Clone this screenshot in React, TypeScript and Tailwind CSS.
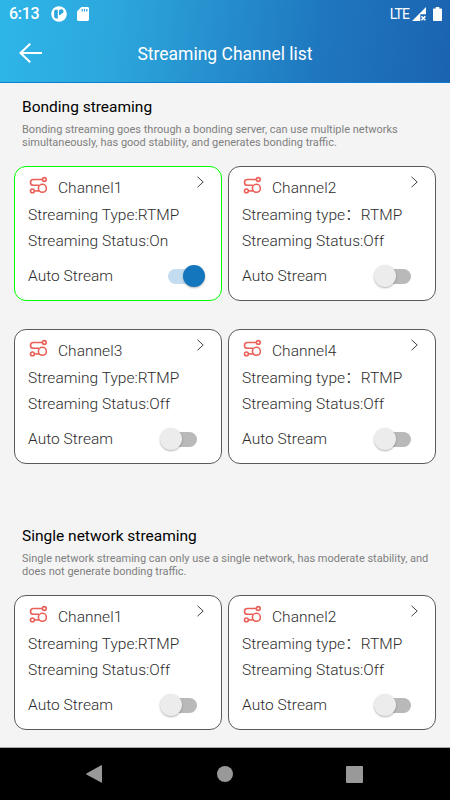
import { useState } from 'react'
import clsx from 'clsx'

type Channel = {
    name: string
    type: string
    live: boolean
}

const bondingChannels: Channel[] = [
    { name: 'Channel1', type: 'Streaming Type:RTMP', live: true },
    { name: 'Channel2', type: 'Streaming type：RTMP', live: false },
    { name: 'Channel3', type: 'Streaming Type:RTMP', live: false },
    { name: 'Channel4', type: 'Streaming type：RTMP', live: false },
]

const singleChannels: Channel[] = [
    { name: 'Channel1', type: 'Streaming Type:RTMP', live: false },
    { name: 'Channel2', type: 'Streaming type：RTMP', live: false },
]

const RouteIcon = () => (
    <svg
        className="h-[19px] w-[18px]"
        viewBox="0 0 18 19"
        fill="none"
        stroke="#ea5f57"
        strokeWidth="1.6"
    >
        <circle cx="15.3" cy="3.5" r="1.9" />
        <circle cx="3.4" cy="14.9" r="1.9" />
        <circle cx="13.4" cy="12.3" r="4" />
        <path d="M13.4 3.5H4.400a2.900 2.900 0 0 0 0 5.800h5.500" />
        <path d="M5.300 14.900h5" />
    </svg>
)

const StatusBar = () => (
    <div className="flex h-[27px] items-center pt-px pr-2 pl-[9px]">
        <span className="w-[42px] text-[16px] leading-none font-medium tracking-[-0.3px]">
            6:13
        </span>
        <svg className="h-4 w-4" viewBox="0 0 16 16">
            <circle cx="8" cy="8" r="7.8" fill="white" />
            <path
                d="M4.2 3.7h2.6v8.700H5.200a2 2 0 0 1-2-2V4.700z"
                fill="#2ba5dc"
            />
            <path d="M8 3.600v5.600a3 3 0 0 0 3-2.400z" fill="#2ba5dc" />
            <circle cx="10.4" cy="5.4" r="2.1" fill="#2ba5dc" />
        </svg>
        <svg className="ml-[10px] h-[14px] w-3" viewBox="0 0 12 14">
            <path
                d="M4.4 0h6.2A1.4 1.4 0 0 1 12 1.4v11.2a1.4 1.4 0 0 1-1.4 1.4H1.4A1.4 1.4 0 0 1 0 12.600V4.400z"
                fill="white"
            />
            <path
                d="M5.2 2v2.5M7.5 2v2.5M9.8 2v2.5"
                stroke="#2aa3db"
                strokeWidth="1.2"
            />
        </svg>
        <span className="ml-auto text-[14px] leading-none tracking-[-0.9px]">
            LTE
        </span>
        <svg className="ml-[3px] h-[14px] w-[14px]" viewBox="0 0 14 14">
            <path d="M14 0v7.2H8.3V14H0z" fill="white" />
            <path
                d="m9.4 9.2 4 4m0-4-4 4"
                stroke="white"
                strokeWidth="1.6"
            />
        </svg>
        <svg className="ml-[7px] h-[14px] w-[9px]" viewBox="0 0 9 14">
            <path
                d="M2.7 0h3.6v1.4h1.900q.8 0 .8.800v11q0 .8-.8.800H.8q-.8 0-.8-.8v-11q0-.8.8-.8h1.900z"
                fill="white"
            />
        </svg>
    </div>
)

const Toggle = ({
    checked,
    onChange,
}: {
    checked: boolean
    onChange: () => void
}) => (
    <button
        type="button"
        role="switch"
        aria-checked={checked}
        aria-label="Auto Stream"
        onClick={onChange}
        className={clsx(
            'mr-[8px] flex h-[15px] w-[29px] items-center rounded-full',
            checked ? 'justify-end bg-[#c3dcef]' : 'justify-start bg-[#b9b9b9]',
        )}
    >
        <span
            className={clsx(
                'h-[22px] w-[22px] shrink-0 rounded-full shadow-[0_1px_2px_rgba(0,0,0,0.3)]',
                checked ? '-mr-[8px] bg-[#1477bd]' : '-ml-[8px] bg-[#ececec]',
            )}
        />
    </button>
)

const ChannelCard = ({ channel }: { channel: Channel }) => {
    const [auto, setAuto] = useState(channel.live)

    return (
        <div
            className={clsx(
                'h-[135px] rounded-[12px] border bg-white pr-4 pl-[13px] text-[15.5px] font-light tracking-[0.03px] text-[#2b2b2b]',
                channel.live ? 'border-[#00ff00]' : 'border-[#5a5a5a]',
            )}
        >
            <div className="flex h-[35px] items-start">
                <div className="ml-px pt-[9px]">
                    <RouteIcon />
                </div>
                <span className="ml-[11px] pt-2 leading-[26px]">
                    {channel.name}
                </span>
                <svg
                    className="mt-[9px] ml-auto h-3 w-[9px]"
                    viewBox="0 0 9 12"
                    fill="none"
                    stroke="#444"
                    strokeWidth="1"
                >
                    <path d="m1.5.8 5.7 5.2-5.7 5.2" />
                </svg>
            </div>
            <div className="h-[26px] leading-[26px] whitespace-nowrap">
                {channel.type}
            </div>
            <div className="h-[27px] leading-[27px]">
                Streaming Status:{channel.live ? 'On' : 'Off'}
            </div>
            <div className="flex h-[42px] items-center justify-between">
                <span className="pt-[2px]">Auto Stream</span>
                <Toggle checked={auto} onChange={() => setAuto(!auto)} />
            </div>
        </div>
    )
}

const Section = ({
    title,
    description,
    channels,
}: {
    title: string
    description: string
    channels: Channel[]
}) => (
    <section>
        <h2 className="px-[22px] text-[15.5px] leading-[22px] text-black">
            {title}
        </h2>
        <p className="mt-[5px] pr-[16px] pl-[22px] text-[11px] leading-[13px] text-[#808080]">
            {description}
        </p>
        <div className="mt-[17px] grid grid-cols-2 gap-x-[6px] gap-y-7 px-[14px]">
            {channels.map((channel) => (
                <ChannelCard key={channel.name} channel={channel} />
            ))}
        </div>
    </section>
)

const App = () => {
    return (
        <div className="flex h-[800px] w-[450px] flex-col overflow-hidden bg-[#f4f4f4] font-[Roboto,'Noto_Sans_CJK_SC',sans-serif]">
            <header className="h-[83px] border-b border-[#0d7fd0] bg-linear-[97deg,#2eb6e8_0%,#2ca7dd_25%,#258dcc_50%,#1f78bf_70%,#1b63b1_100%] text-white">
                <StatusBar />
                <div className="grid h-[53px] grid-cols-[1fr_auto_1fr] items-center">
                    <svg
                        className="-mt-px ml-[19px] h-5 w-6"
                        viewBox="0 0 24 20"
                        fill="none"
                        stroke="white"
                        strokeWidth="2"
                    >
                        <path d="M23 10H1.5M11.2.8 1.5 10l9.7 9.2" />
                    </svg>
                    <h1 className="pt-px text-[17.5px]">
                        Streaming Channel list
                    </h1>
                </div>
            </header>
            <main className="flex-1 pt-[13px]">
                <Section
                    title="Bonding streaming"
                    description="Bonding streaming goes through a bonding server, can use multiple networks simultaneously, has good stability, and generates bonding traffic."
                    channels={bondingChannels}
                />
                <div className="h-[61px]" />
                <Section
                    title="Single network streaming"
                    description="Single network streaming can only use a single network, has moderate stability, and does not generate bonding traffic."
                    channels={singleChannels}
                />
            </main>
            <nav className="grid h-[53px] grid-cols-3 place-items-center border-t border-[#a8a8a8] bg-black px-[29px]">
                <svg className="h-[18px] w-4" viewBox="0 0 16 18">
                    <path
                        d="M15.2.3q.8-.3.8.6v16.2q0 .9-.8.5L.4 9.5Q0 9 .4 8.500z"
                        fill="#999"
                    />
                </svg>
                <div className="h-4 w-4 rounded-full bg-[#999]" />
                <div className="mr-[2px] h-[17px] w-[17px] rounded-[1px] bg-[#999]" />
            </nav>
        </div>
    )
}

export default App
